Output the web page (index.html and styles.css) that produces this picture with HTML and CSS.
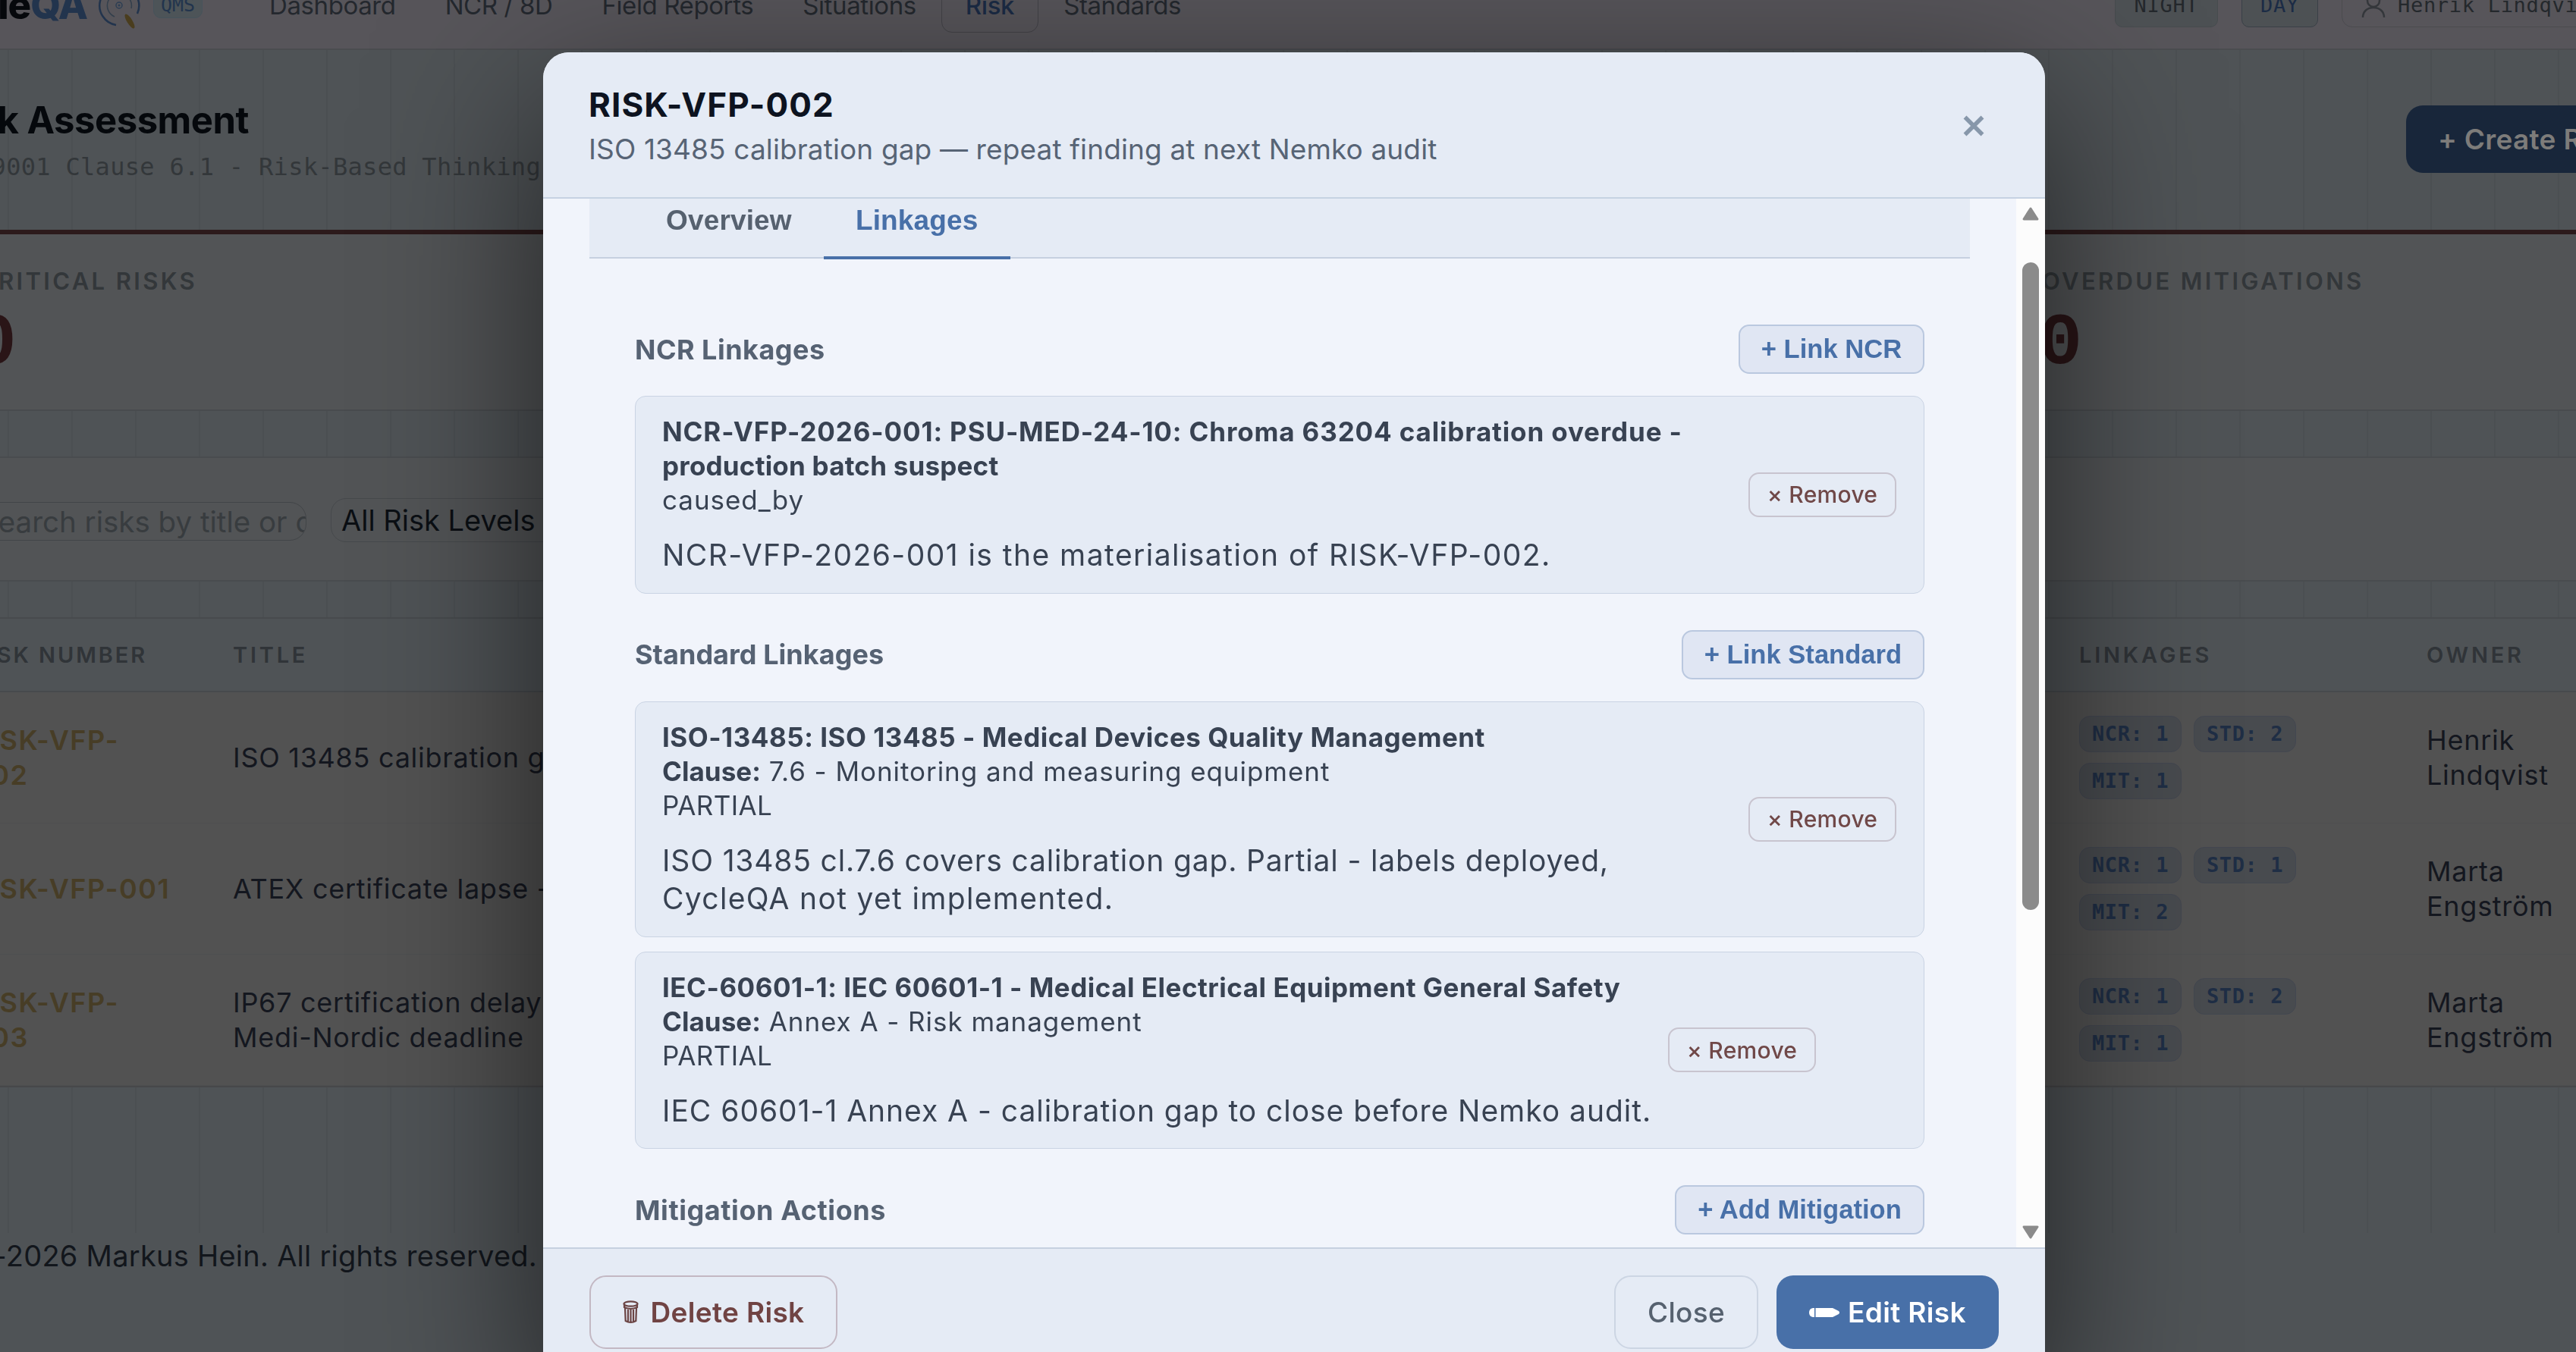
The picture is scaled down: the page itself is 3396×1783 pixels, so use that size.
FILE: index.html
```html
<!DOCTYPE html>
<html lang="en">
<head>
    <meta charset="UTF-8">
    <meta name="viewport" content="width=device-width, initial-scale=1.0">
    <title>CycleQA - Risk Assessment</title>
    <link rel="stylesheet" href="styles.css">
</head>
<body>
    <header class="header">
        <div class="logo">Cycle<span>QA</span></div>
        <svg class="logo-icon" width="56" height="78" viewBox="0 0 56 78" fill="none">
            <path d="M24 65A26 26 0 1 1 52 50" stroke="#22344d" stroke-width="2.5"/>
            <path d="M22 54A16 16 0 1 1 44 43" stroke="#333f4c" stroke-width="1.5"/>
            <circle cx="28" cy="39" r="4" stroke="#2c3e54" stroke-width="1.5"/>
            <circle cx="28" cy="39" r="1.5" fill="#2c3e54"/>
            <ellipse cx="42" cy="60" rx="3.5" ry="11" transform="rotate(-32 42 60)" fill="#4a3d1e"/>
        </svg>
        <span class="qms">QMS</span>
        <nav class="nav">
            <a class="nav-item">Dashboard</a>
            <a class="nav-item">NCR / 8D</a>
            <a class="nav-item">Field Reports</a>
            <a class="nav-item">Situations</a>
            <a class="nav-item active">Risk</a>
            <a class="nav-item">Standards</a>
        </nav>
        <button class="theme-btn">NIGHT</button>
        <button class="theme-btn day">DAY</button>
        <div class="user">
            <svg width="32" height="40" viewBox="0 0 32 40" fill="none" stroke="#34373b" stroke-width="2.5">
                <circle cx="16" cy="14" r="8"/>
                <path d="M2 36c0-8 6-13 14-13s14 5 14 13"/>
            </svg>
            <span>Henrik Lindqvist</span>
        </div>
    </header>

    <main class="page">
        <div class="page-header">
            <div>
                <h1 class="page-title">Risk Assessment</h1>
                <p class="page-sub">ISO 9001 Clause 6.1 - Risk-Based Thinking</p>
            </div>
            <button class="create-btn">+ Create Risk</button>
        </div>

        <section class="kpis">
            <div class="kpi critical">
                <div class="kpi-label">CRITICAL RISKS</div>
                <div class="kpi-value">0</div>
            </div>
            <div class="kpi overdue">
                <div class="kpi-label">OVERDUE MITIGATIONS</div>
                <div class="kpi-value">0</div>
            </div>
        </section>

        <section class="filters">
            <div class="search">Search risks by title or description</div>
            <div class="select">All Risk Levels</div>
        </section>

        <section class="table">
            <div class="tr th">
                <div class="th-num">RISK NUMBER</div><div>TITLE</div><div>LINKAGES</div><div>OWNER</div>
            </div>
            <div class="tr">
                <div class="num">RISK-VFP-<br>002</div>
                <div>ISO 13485 calibration gap</div>
                <div class="tags"><span class="tag">NCR: 1</span><span class="tag">STD: 2</span><span class="tag">MIT: 1</span></div>
                <div>Henrik<br>Lindqvist</div>
            </div>
            <div class="tr">
                <div class="num">RISK-VFP-001</div>
                <div>ATEX certificate lapse - EX</div>
                <div class="tags"><span class="tag">NCR: 1</span><span class="tag">STD: 1</span><span class="tag">MIT: 2</span></div>
                <div>Marta<br>Engström</div>
            </div>
            <div class="tr">
                <div class="num">RISK-VFP-<br>003</div>
                <div>IP67 certification delay<br>Medi-Nordic deadline</div>
                <div class="tags"><span class="tag">NCR: 1</span><span class="tag">STD: 2</span><span class="tag">MIT: 1</span></div>
                <div>Marta<br>Engström</div>
            </div>
        </section>
    </main>
    <footer class="footer"><span>© 2025-2026 Markus Hein. All rights reserved.</span></footer>

    <div class="overlay">
        <div class="modal">
            <div class="modal-header">
                <div>
                    <h2 class="modal-title">RISK-VFP-002</h2>
                    <p class="modal-sub">ISO 13485 calibration gap — repeat finding at next Nemko audit</p>
                </div>
                <svg class="modal-x" width="28" height="28" viewBox="0 0 28 28" stroke="#8797aa" stroke-width="5.5">
                    <path d="M2.500 2.500l23 23M25.500 2.500l-23 23"/>
                </svg>
            </div>

            <div class="modal-main">
                <div class="modal-body">
                    <div class="tabs">
                        <button class="tab">Overview</button>
                        <button class="tab active">Linkages</button>
                    </div>

                    <div class="linkages">
                        <div class="section">
                            <div class="section-head">
                                <h3>NCR Linkages</h3>
                                <button class="link-btn ncr">+ Link NCR</button>
                            </div>
                            <div class="card">
                                <div class="info">
                                    <div class="card-title">NCR-VFP-2026-001: PSU-MED-24-10: Chroma 63204 calibration overdue -</div>
                                    <div class="card-title second">production batch suspect</div>
                                    <div class="line">caused_by</div>
                                    <div class="desc wide">NCR-VFP-2026-001 is the materialisation of RISK-VFP-002.</div>
                                </div>
                                <button class="remove">× Remove</button>
                            </div>
                        </div>

                        <div class="section">
                            <div class="section-head">
                                <h3 class="tight">Standard Linkages</h3>
                                <button class="link-btn std">+ Link Standard</button>
                            </div>
                            <div class="card">
                                <div class="info">
                                    <div class="card-title std">ISO-13485: ISO 13485 - Medical Devices Quality Management</div>
                                    <div class="line"><b>Clause:</b> 7.6 - Monitoring and measuring equipment</div>
                                    <div class="line partial">PARTIAL</div>
                                    <div class="desc">ISO 13485 cl.7.6 covers calibration gap. Partial - labels deployed,<br><span class="loose">CycleQA not yet implemented.</span></div>
                                </div>
                                <button class="remove">× Remove</button>
                            </div>
                            <div class="card">
                                <div class="info">
                                    <div class="card-title std">IEC-60601-1: IEC 60601-1 - Medical Electrical Equipment General Safety</div>
                                    <div class="line"><b>Clause:</b> Annex A - Risk management</div>
                                    <div class="line partial">PARTIAL</div>
                                    <div class="desc close">IEC 60601-1 Annex A - calibration gap to close before Nemko audit.</div>
                                </div>
                                <button class="remove inset">× Remove</button>
                            </div>
                        </div>

                        <div class="section">
                            <div class="section-head">
                                <h3 class="wide">Mitigation Actions</h3>
                                <button class="link-btn mit">+ Add Mitigation</button>
                            </div>
                        </div>
                    </div>
                </div>
                <div class="scrollbar">
                    <svg width="22" height="18" viewBox="0 0 22 18"><path d="M11 2L20 16H2z" fill="#8b8b8b" stroke="#8b8b8b" stroke-width="3" stroke-linejoin="round"/></svg>
                    <div class="thumb"></div>
                    <svg width="22" height="18" viewBox="0 0 22 18"><path d="M11 16L20 2H2z" fill="#8b8b8b" stroke="#8b8b8b" stroke-width="3" stroke-linejoin="round"/></svg>
                </div>
            </div>

            <div class="modal-footer">
                <button class="btn delete">
                    <svg width="21" height="31" viewBox="0 0 21 31" fill="none" stroke="#6b4444" stroke-width="2.2">
                        <ellipse cx="10.500" cy="4.500" rx="9" ry="3.200"/>
                        <path d="M2 6v3q8.500 4 17 0V6M3 10l.7 17q6.800 4 13.600 0L18 10M7 12v16M10.500 12v17M14 12v16"/>
                    </svg>
                    Delete Risk
                </button>
                <button class="btn close-btn">Close</button>
                <button class="btn edit">
                    <svg width="40" height="14" viewBox="0 0 40 14" fill="#fff">
                        <path d="M5 1h2v12H5q-5-1-5-6t5-6zM8.500 1H31l8 4q2 2 0 4l-8 4H8.500z"/>
                    </svg>
                    Edit Risk
                </button>
            </div>
        </div>
    </div>
</body>
</html>
```
FILE: styles.css
```css
* {
    box-sizing: border-box;
    margin: 0;
    padding: 0;
}

body {
    height: 1783px;
    overflow: hidden;
    display: flex;
    flex-direction: column;
    background-color: #4f5356;
    font-family: Inter, sans-serif;
    white-space: nowrap;
}

button {
    font-family: Inter, sans-serif;
    white-space: nowrap;
    border: none;
    background: none;
}

/* header */
.header {
    flex: none;
    display: flex;
    align-items: center;
    height: 117px;
    margin-top: -51px;
    background-color: #57555a;
    border-bottom: 2px solid #4b4c50;
}

.logo {
    flex: none;
    display: flex;
    justify-content: flex-end;
    width: 115px;
    font-size: 51px;
    font-weight: 800;
    letter-spacing: -0.02em;
    color: #06080c;
}

.logo span {
    color: #22344d;
}

.logo-icon {
    flex: none;
    margin-left: 14px;
}

.qms {
    flex: none;
    width: 65px;
    height: 37px;
    margin-left: 17px;
    margin-top: -2px;
    border: 1px solid #46535b;
    border-radius: 10px;
    background-color: #4d5458;
    color: #22344d;
    font: 25px/37px "DejaVu Sans Mono", monospace;
    text-align: center;
}

.nav {
    flex: none;
    display: flex;
    gap: 1px;
    width: 2465px;
    margin-left: 56px;
}

.nav-item {
    padding: 0 31px;
    height: 72px;
    line-height: 70px;
    font-size: 33px;
    letter-spacing: -0.012em;
    color: #24282e;
    border: 1px solid transparent;
    border-radius: 14px;
}

.nav-item.active {
    color: #1b2b45;
    font-weight: 500;
    border-color: #444348;
}

.theme-btn {
    flex: none;
    width: 136px;
    height: 59px;
    margin-right: 31px;
    border: 1px solid #474b4e;
    border-radius: 10px;
    background-color: #4d5154;
    font: 27px "DejaVu Sans Mono", monospace;
    letter-spacing: 0.7px;
    color: #24282c;
}

.theme-btn.day {
    width: 101px;
    border-color: #3a4047;
    color: #1b2b45;
}

.user {
    flex: none;
    display: flex;
    align-items: center;
    width: 420px;
    height: 59px;
    padding-left: 25px;
    gap: 16px;
    border: 1px solid #4b4b4f;
    border-radius: 14px;
    font: 27px "DejaVu Sans Mono", monospace;
    letter-spacing: 0.7px;
    color: #24282c;
}

/* page */
.page {
    flex: none;
    height: 1560px;
    background-image: repeating-linear-gradient(to right, transparent 0, transparent 10px, #4b4f52 10px, #4b4f52 12px, transparent 12px, transparent 84.05px);
}

.page-header {
    display: flex;
    height: 237px;
}

.page-title {
    display: flex;
    justify-content: flex-end;
    width: 328px;
    margin-top: 63px;
    font-size: 49px;
    line-height: 60px;
    letter-spacing: -0.01em;
    color: #05080c;
}

.page-sub {
    display: flex;
    justify-content: flex-end;
    width: 713px;
    margin-top: 11px;
    font: 32px/40px "DejaVu Sans Mono", monospace;
    letter-spacing: 0.0098em;
    color: #33373a;
}

.create-btn {
    flex: none;
    width: 300px;
    height: 89px;
    margin: 73px 0 0 2459px;
    padding-left: 42px;
    border-radius: 22px;
    background-color: #18263a;
    color: #7d7c7a;
    font-size: 37px;
    font-weight: 600;
    letter-spacing: 0.008em;
    text-align: left;
}

.kpis {
    display: flex;
    height: 239px;
    background-color: #525456;
    border-top: 6px solid #2c1a1b;
    border-bottom: 2px solid #484b4e;
}

.kpi {
    padding-top: 42px;
    width: 2692px;
}

.kpi.overdue {
    width: 704px;
}

.kpi-label {
    font-size: 31px;
    font-weight: 600;
    line-height: 40px;
    letter-spacing: 0.108em;
    color: #33373a;
}

.kpi-value {
    margin-top: 13px;
    font: bold 97px/98px "Liberation Mono", monospace;
    color: #2a1517;
}

.critical .kpi-label,
.critical .kpi-value {
    display: flex;
    justify-content: flex-end;
    width: 260px;
}

.critical .kpi-value {
    width: 22px;
}

.overdue .kpi-value {
    margin-left: -5px;
}

.filters {
    display: flex;
    align-items: center;
    height: 165px;
    margin-top: 60px;
    background-color: #525456;
    border-top: 2px solid #494c4f;
    border-bottom: 2px solid #494c4f;
}

.search {
    flex: none;
    width: 464px;
    height: 51px;
    margin-left: -60px;
    margin-top: 6px;
    padding-left: 32px;
    border: 1px solid #424548;
    border-radius: 22px;
    overflow: hidden;
    font-size: 38.5px;
    line-height: 50px;
    color: #383c3f;
}

.select {
    width: 330px;
    height: 58px;
    margin-left: 32px;
    margin-top: 3px;
    padding-left: 13px;
    border: 1px solid #46494c;
    border-radius: 20px;
    font-size: 38px;
    line-height: 57px;
    color: #0b0f14;
}

.table {
    margin-top: 47px;
    background-color: #525252;
    border-top: 2px solid #474a4d;
    border-bottom: 2px solid #47484a;
}

.tr {
    display: grid;
    grid-template-columns: 344px 2434px 458px 197px;
    align-items: center;
    width: 3433px;
    height: 173px;
    margin-left: -37px;
    padding-bottom: 1px;
    border-bottom: 1px solid #4e4f50;
    font-size: 36px;
    line-height: 46px;
    letter-spacing: 0.02em;
    color: #14171f;
}

.tr.th {
    height: 97px;
    padding-bottom: 0;
    background-color: #4f5356;
    border-bottom: 2px solid #474a4d;
    font-size: 29px;
    font-weight: 600;
    letter-spacing: 0.13em;
    color: #303438;
}

.th-num {
    letter-spacing: 0.1em;
}

.num {
    font-weight: 600;
    letter-spacing: 0.042em;
    color: #473d26;
}

.tags {
    display: flex;
    flex-wrap: wrap;
    gap: 14px 16px;
    width: 300px;
}

.tag {
    width: 135px;
    height: 48px;
    border: 1px solid #434750;
    border-radius: 14px;
    background-color: #484b4f;
    font: bold 27px/46px "DejaVu Sans Mono", monospace;
    letter-spacing: 0.6px;
    text-align: center;
    color: #1f2e45;
}

.footer {
    display: flex;
    justify-content: flex-end;
    width: 708px;
    padding-top: 7px;
    font-size: 38px;
    line-height: 46px;
    letter-spacing: 0.0065em;
    color: #12161c;
}

/* modal */
.overlay {
    position: fixed;
    inset: 0;
    padding: 69px 0 0 716px;
    overflow: hidden;
}

.modal {
    width: 1980px;
    height: 1760px;
    border-radius: 34px;
    background-color: #f1f4fb;
    box-shadow: 0 70px 220px rgba(0, 0, 0, 0.6);
    overflow: hidden;
}

.modal-header {
    display: flex;
    justify-content: space-between;
    height: 193px;
    padding: 43px 80px 0 60px;
    background-color: #e5ebf5;
    border-bottom: 2px solid #c6d2e2;
}

.modal-title {
    font-size: 44px;
    line-height: 52px;
    letter-spacing: 0.0246em;
    color: #0d1320;
}

.modal-sub {
    margin-top: 8px;
    font-size: 37px;
    line-height: 50px;
    letter-spacing: 0.0035em;
    color: #576475;
}

.modal-x {
    margin-top: 40px;
}

.modal-main {
    display: flex;
    height: 1383px;
}

.modal-body {
    flex: 1;
    padding: 0 61px;
    overflow: hidden;
}

.tabs {
    display: flex;
    height: 79px;
    padding-left: 60px;
    background-color: #e5ebf5;
    border-bottom: 2px solid #c6d0e0;
}

.tab {
    height: 80px;
    padding: 0 42px 18px 41px;
    border-bottom: 4px solid transparent;
    font: bold 37px "Liberation Sans", Arial, sans-serif;
    letter-spacing: 0.004em;
    color: #56616f;
}

.tab.active {
    width: 246px;
    padding: 0 0 18px;
    border-color: #4870a8;
    color: #4870a8;
}

.linkages {
    padding: 87px 60px 0;
}

.section {
    margin-bottom: 48px;
}

.section-head {
    display: flex;
    justify-content: space-between;
    align-items: center;
    height: 65px;
    margin-bottom: 29px;
}

.section-head h3 {
    font-size: 36px;
    letter-spacing: 0.013em;
    color: #566273;
}

.section-head h3.tight {
    letter-spacing: 0.001em;
}

.section-head h3.wide {
    letter-spacing: 0.016em;
}

.link-btn {
    width: 245px;
    height: 65px;
    border: 2px solid #bac8df;
    border-radius: 14px;
    background-color: #e0e6f3;
    font: bold 34.6px "Liberation Sans", Arial, sans-serif;
    color: #4870a8;
}

.link-btn.std {
    width: 320px;
}

.link-btn.mit {
    width: 329px;
}

.card {
    display: flex;
    justify-content: space-between;
    align-items: center;
    padding: 24px 36px 24px 35px;
    border: 1px solid #c9d3e3;
    border-radius: 14px;
    background-color: #e5ebf5;
    color: #384252;
}

.card + .card {
    margin-top: 19px;
}

.card-title,
.line {
    font-size: 35px;
    line-height: 45px;
    letter-spacing: 0.027em;
}

.card-title {
    font-weight: 700;
    letter-spacing: 0.0245em;
}

.card-title.std {
    letter-spacing: 0.0145em;
}

.card-title.second {
    letter-spacing: 0.006em;
}

.line b {
    letter-spacing: 0.001em;
}

.line.partial {
    letter-spacing: 0.012em;
}

.desc {
    margin-top: 25px;
    font-size: 39px;
    line-height: 50.5px;
    letter-spacing: 0.0215em;
}

.desc.wide {
    letter-spacing: 0.037em;
}

.desc.close {
    letter-spacing: 0.0248em;
}

.desc .loose {
    letter-spacing: 0.034em;
}

.remove {
    flex: none;
    width: 195px;
    height: 59px;
    border: 2px solid #c8c4cf;
    border-radius: 14px;
    font-size: 30px;
    font-weight: 500;
    letter-spacing: 0.01em;
    color: #704848;
}

.remove.inset {
    margin-right: 106px;
}

.scrollbar {
    display: flex;
    flex-direction: column;
    align-items: center;
    width: 38px;
    padding: 11px 1px 11px 0;
    background-color: #fcfcfc;
}

.thumb {
    width: 22px;
    height: 857px;
    margin: 55px 0 416px;
    border-radius: 11px;
    background-color: #8b8b8b;
}

.modal-footer {
    display: flex;
    height: 183px;
    padding: 35px 61px 0;
    background-color: #e5ebf5;
    border-top: 2px solid #c6d0e0;
}

.btn {
    display: flex;
    align-items: center;
    justify-content: center;
    height: 97px;
    border: 2px solid #ccd5e3;
    border-radius: 22px;
    font-size: 37px;
    font-weight: 600;
    letter-spacing: 0.009em;
}

.delete {
    width: 327px;
    gap: 16px;
    margin-right: auto;
    border-color: #c3b8c3;
    color: #704343;
}

.close-btn {
    width: 190px;
    font-weight: 500;
    color: #56616f;
}

.edit {
    width: 293px;
    margin-left: 24px;
    gap: 11px;
    border: none;
    background-color: #4870a8;
    color: #fff;
}
```
